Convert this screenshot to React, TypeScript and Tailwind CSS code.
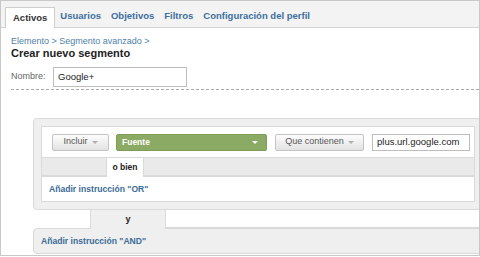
import React from "react";

function Caret({ color }: { color: string }) {
  return (
    <span
      className="inline-block w-0 h-0 border-x-[3px] border-t-[3px] border-x-transparent"
      style={{ borderTopColor: color }}
    />
  );
}

function GrayButton({ label, className }: { label: string; className: string }) {
  return (
    <button
      className={`${className} shrink-0 h-[17px] flex items-center justify-center gap-[4px] rounded-[2px] border border-[#c4c4c4] bg-linear-to-b from-[#fdfdfd] to-[#e2e2e2] text-[9px] text-[#555]`}
    >
      {label}
      <Caret color="#b0b0b0" />
    </button>
  );
}

export default function App() {
  const tabs = ["Usuarios", "Objetivos", "Filtros", "Configuración del perfil"];
  return (
    <div className="w-[480px] h-[257px] bg-white overflow-hidden font-['Liberation_Sans',Arial,sans-serif]">
      <div className="h-[256px] border border-[#c8c8c8] overflow-hidden flex flex-col">
        {/* tab bar */}
        <div className="h-[27px] shrink-0 flex items-end bg-[#f3f3f3] border-b border-[#d4d4d4] pl-[4px]">
          <div className="h-[21px] -mb-px px-[7px] flex items-center bg-white border border-b-0 border-[#cdcdcd] text-[9.5px] font-bold text-[#333]">
            Activos
          </div>
          {tabs.map((t) => (
            <div
              key={t}
              className="h-[21px] px-[5px] flex items-center text-[9.5px] font-bold text-[#3d6f9c]"
            >
              {t}
            </div>
          ))}
        </div>

        {/* header */}
        <div className="pl-[10px] pt-[8px]">
          <p className="text-[9px] leading-[11px] text-[#4f7fab]">
            Elemento &gt; Segmento avanzado &gt;
          </p>
          <h1 className="text-[11px] leading-[13px] font-bold text-[#222]">
            Crear nuevo segmento
          </h1>
          <div className="mt-[7px] flex items-center">
            <span className="w-[42px] text-[9px] text-[#666]">Nombre:</span>
            <div className="w-[134px] h-[20px] border border-[#bdbdbd] flex items-center pl-[4px] text-[9.5px] text-[#222]">
              Google+
            </div>
          </div>
          <div className="mt-[2px] border-t border-dashed border-[#a8a8a8]" />
        </div>

        {/* OR panel */}
        <div className="mt-[28px] ml-[32px] -mr-[4px] rounded-[4px] border border-[#d9d9d9] bg-[#efefef] px-[7px] pt-[7px] pb-[7px]">
          <div className="h-[32px] bg-white border border-[#d9d9d9] flex items-center pl-[10px]">
            <GrayButton label="Incluir" className="w-[57px]" />
            <button className="ml-[7px] shrink-0 w-[151px] h-[17px] flex items-center justify-between px-[5px] rounded-[2px] border border-[#7d9c57] bg-[#8bab64] text-[8.5px] font-bold text-white">
              Fuente
              <span className="mr-[3px] flex">
                <Caret color="#ffffff" />
              </span>
            </button>
            <GrayButton label="Que contienen" className="ml-[8px] w-[89px]" />
            <div className="ml-[8px] shrink-0 w-[98px] h-[17px] border border-[#bdbdbd] flex items-center pl-[4px] text-[9.5px] text-[#222]">
              plus.url.google.com
            </div>
          </div>
          <div className="flex h-[18px]">
            <div className="w-[66px] bg-[#eaeaea] border border-t-0 border-[#dadada]" />
            <div className="relative z-10 w-[36px] h-[19px] bg-white flex items-center justify-center text-[8.5px] font-bold text-[#222]">
              o bien
            </div>
            <div className="flex-1 bg-[#eaeaea] border border-t-0 border-[#dadada]" />
          </div>
          <div className="h-[26px] bg-white border border-[#d9d9d9] flex items-center pl-[7px] text-[8.6px] font-bold text-[#3b6b97]">
            Añadir instrucción "OR"
          </div>
        </div>

        {/* AND row */}
        <div className="ml-[32px] -mr-[4px] flex h-[18px]">
          <div className="w-[58px] border-r border-[#dadada]" />
          <div className="relative z-10 w-[74px] h-[19px] bg-[#efefef] flex items-center justify-center text-[9px] font-bold text-[#222]">
            y
          </div>
          <div className="flex-1 border border-t-0 border-[#dadada]" />
        </div>
        <div className="ml-[32px] -mr-[4px] h-[26px] rounded-[4px] border border-[#d9d9d9] bg-[#efefef] flex items-center pl-[7px] text-[8.6px] font-bold text-[#3b6b97]">
          Añadir instrucción "AND"
        </div>
      </div>
    </div>
  );
}
